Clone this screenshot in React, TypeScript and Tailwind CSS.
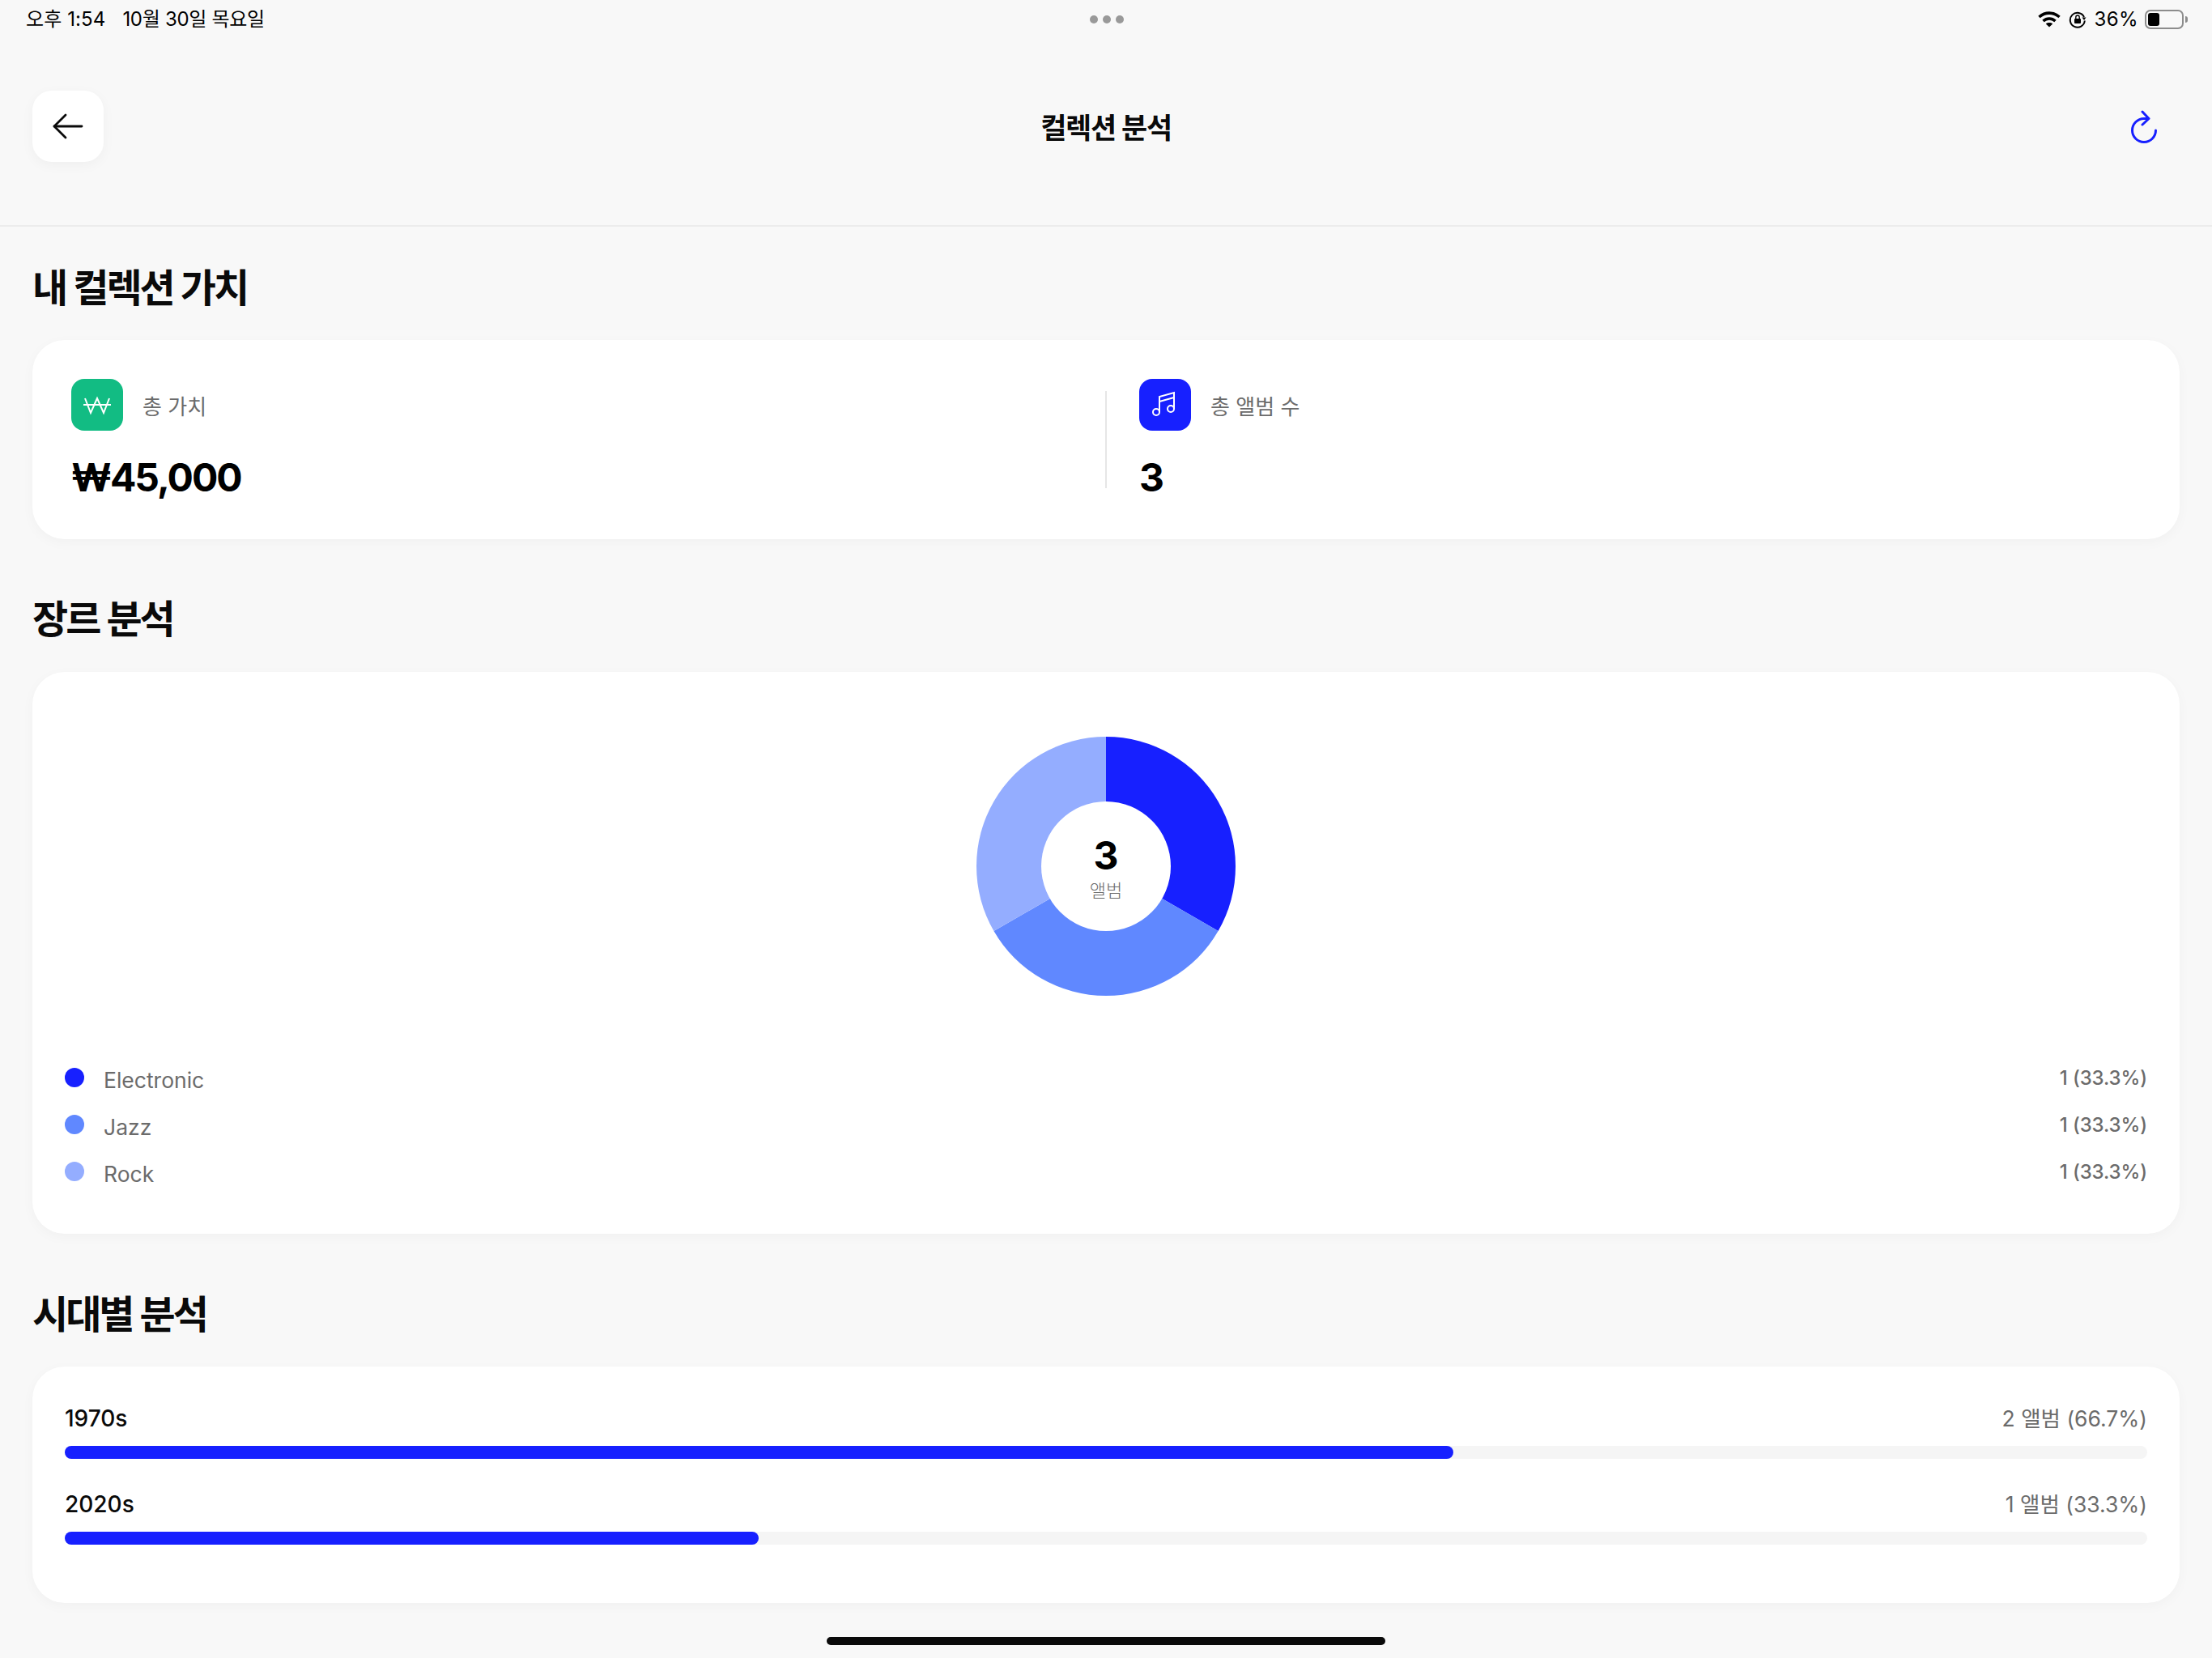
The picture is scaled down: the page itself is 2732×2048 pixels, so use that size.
import * as React from 'react';

const FONT = "font-['Inter','Noto_Sans_CJK_KR',sans-serif]";

function StatusBar() {
  return (
    <div className="flex h-[48px] items-center justify-between pl-[32px] pr-[30px] text-[24px] leading-[28px] text-black">
      <div className="flex w-[400px] gap-[21px]">
        <span className="tracking-[0.1px]">오후 1:54</span>
        <span className="tracking-[-0.3px]">10월 30일 목요일</span>
      </div>
      <div className="flex gap-[6px]">
        <span className="h-[10px] w-[10px] rounded-full bg-[#999999]" />
        <span className="h-[10px] w-[10px] rounded-full bg-[#999999]" />
        <span className="h-[10px] w-[10px] rounded-full bg-[#999999]" />
      </div>
      <div className="flex w-[400px] items-center justify-end">
        <svg width="28" height="20" viewBox="0 0 28 20" fill="none" stroke="black" strokeWidth="3.6">
          <path d="M1.5 7 C9 0.5 19 0.5 26.5 7" />
          <path d="M6.5 12 C11 8 17 8 21.5 12" />
          <path d="M14 19.5 L9.8 15.5 C12 13.6 16 13.6 18.2 15.5 Z" fill="black" stroke="none" />
        </svg>
        <svg className="ml-[10px]" width="22" height="22" viewBox="0 0 22 22" fill="none">
          <path d="M19 8 A9 9 0 1 0 19.8 12.5" stroke="black" strokeWidth="2" />
          <path d="M16.5 8.5 L21.5 8.5 L19 12 Z" fill="black" />
          <rect x="7" y="10" width="8" height="6" rx="1" fill="black" />
          <path d="M8.8 10 V8.2 A2.2 2.2 0 0 1 13.2 8.2 V10" stroke="black" strokeWidth="1.4" />
        </svg>
        <span className="ml-[10px] tracking-[0.4px]">36%</span>
        <div className="ml-[8px] flex h-[24px] w-[48px] items-center rounded-[7px] border-2 border-[#8c8c8c] pl-[2px]">
          <div className="h-[16px] w-[14px] rounded-[3px] bg-black" />
        </div>
        <div className="ml-[2px] h-[8px] w-[3px] rounded-r-full bg-[#8c8c8c]" />
      </div>
    </div>
  );
}

function Header() {
  return (
    <div className="flex h-[232px] items-start justify-between border-b-2 border-[#ececec] px-[40px] pt-[64px]">
      <button className="flex h-[88px] w-[88px] items-center justify-center rounded-[24px] bg-white shadow-[0_4px_16px_rgba(0,0,0,0.04)]">
        <svg width="40" height="34" viewBox="0 0 40 34" fill="none" stroke="#0a0a0a" strokeWidth="2.8" strokeLinecap="round" strokeLinejoin="round">
          <path d="M3 17 H37" />
          <path d="M17 3 L3 17 L17 31" />
        </svg>
      </button>
      <h1 className="mt-[24px] text-[35px] leading-[44px] font-semibold tracking-[-1.4px] text-[#0a0a0a]">컬렉션 분석</h1>
      <div className="flex h-[88px] w-[88px] items-center justify-end pr-[26px]">
        <svg className="mt-[2px]" width="36" height="42" viewBox="0 0 36 42" fill="none" stroke="#1720ff" strokeWidth="3" strokeLinecap="round" strokeLinejoin="round">
          <path d="M32.5 25 A14.5 14.5 0 1 1 18 10.5 H22" />
          <path d="M16 2 L24 10.5 L16 18" />
        </svg>
      </div>
    </div>
  );
}

function SectionTitle({ children }: { children: React.ReactNode }) {
  return <h2 className="text-[48px] leading-[56px] font-semibold tracking-[-3px] text-[#0a0a0a]">{children}</h2>;
}

function Card({ className, children }: { className: string; children: React.ReactNode }) {
  return (
    <div className={`rounded-[40px] bg-white shadow-[0_4px_16px_rgba(0,0,0,0.03)] ${className}`}>{children}</div>
  );
}

function Stat({ icon, color, label, value }: { icon: React.ReactNode; color: string; label: string; value: string }) {
  return (
    <div>
      <div className="flex items-center gap-[24px]">
        <div className={`flex h-[64px] w-[64px] items-center justify-center rounded-[16px] ${color}`}>{icon}</div>
        <span className="mt-[6px] text-[26px] leading-[36px] font-normal text-[#6b6b6b]">{label}</span>
      </div>
      <div className="mt-[28px] text-[48px] leading-[60px] font-bold tracking-[-2px] text-black">{value}</div>
    </div>
  );
}

const genres = [
  { name: 'Electronic', dot: 'bg-[#1720ff]' },
  { name: 'Jazz', dot: 'bg-[#6088ff]' },
  { name: 'Rock', dot: 'bg-[#94adff]' },
];

const eras = [
  { name: '1970s', label: '2 앨범 (66.7%)', width: 'w-[66.67%]' },
  { name: '2020s', label: '1 앨범 (33.3%)', width: 'w-[33.33%]' },
];

function Donut() {
  // 120도씩 세 조각
  const sx = 160 + 160 * Math.sin((2 * Math.PI) / 3);
  const sy = 160 - 160 * Math.cos((2 * Math.PI) / 3);
  const lx = 160 - 160 * Math.sin((2 * Math.PI) / 3);
  return (
    <div className="relative h-[320px] w-[320px]">
      <svg width="320" height="320" viewBox="0 0 320 320">
        <path d={`M160 160 L160 0 A160 160 0 0 1 ${sx} ${sy} Z`} fill="#1720ff" />
        <path d={`M160 160 L${sx} ${sy} A160 160 0 0 1 ${lx} ${sy} Z`} fill="#6088ff" />
        <path d={`M160 160 L${lx} ${sy} A160 160 0 0 1 160 0 Z`} fill="#94adff" />
      </svg>
      <div className="absolute top-[80px] left-[80px] flex h-[160px] w-[160px] flex-col items-center rounded-full bg-white pt-[39px]">
        <span className="text-[48px] leading-[56px] font-bold text-black">3</span>
        <span className="mt-[1px] text-[22px] leading-[28px] font-light text-[#6b6b6b]">앨범</span>
      </div>
    </div>
  );
}

export default function App() {
  return (
    <div className={`h-[2048px] w-full overflow-hidden bg-[#f8f8f8] ${FONT}`}>
      <StatusBar />
      <Header />
      <div className="px-[40px]">
        <div className="mt-[48px]">
          <SectionTitle>내 컬렉션 가치</SectionTitle>
        </div>
        <Card className="mt-[36px] flex h-[246px] items-start pt-[48px]">
          <div className="w-[1325px] pl-[48px]">
            <Stat
              color="bg-[#12bc83]"
              label="총 가치"
              value="₩45,000"
              icon={
                <svg width="64" height="64" viewBox="0 0 64 64" fill="none" stroke="white" strokeWidth="2">
                  <path d="M17 24 L24 42 L32 24 L40 42 L47 24" />
                  <path d="M15 32 H49" />
                </svg>
              }
            />
          </div>
          <div className="mt-[15px] h-[120px] w-[2px] bg-[#e6e6e6]" />
          <div className="pl-[40px]">
            <Stat
              color="bg-[#1720ff]"
              label="총 앨범 수"
              value="3"
              icon={
                <svg width="64" height="64" viewBox="0 0 64 64" fill="none" stroke="white" strokeWidth="2">
                  <circle cx="21" cy="41" r="4" />
                  <circle cx="39" cy="37" r="4" />
                  <path d="M25 41 V22 L43 17 V37" />
                  <path d="M25 28 L43 23" />
                </svg>
              }
            />
          </div>
        </Card>

        <div className="mt-[71px]">
          <SectionTitle>장르 분석</SectionTitle>
        </div>
        <Card className="mt-[37px] h-[694px] px-[40px] pt-[80px]">
          <div className="flex justify-center">
            <Donut />
          </div>
          <div className="mt-[84px] flex flex-col gap-[22px]">
            {genres.map((g) => (
              <div key={g.name} className="flex h-[36px] items-center justify-between">
                <div className="flex items-center gap-[24px]">
                  <span className={`mb-[2px] h-[24px] w-[24px] rounded-full ${g.dot}`} />
                  <span className="mt-[4px] text-[26.5px] leading-[36px] text-[#6b6b6b]">{g.name}</span>
                </div>
                <span className="text-[24px] leading-[32px] font-medium tracking-[-0.1px] text-[#6b6b6b]">1 (33.3%)</span>
              </div>
            ))}
          </div>
        </Card>

        <div className="mt-[72px]">
          <SectionTitle>시대별 분석</SectionTitle>
        </div>
        <Card className="mt-[36px] flex h-[292px] flex-col gap-[38px] px-[40px] pt-[46px]">
          {eras.map((e) => (
            <div key={e.name}>
              <div className="flex items-center justify-between">
                <span className="text-[28px] leading-[36px] font-medium text-[#0a0a0a]">{e.name}</span>
                <span className="text-[26.5px] leading-[36px] text-[#6b6b6b]">{e.label}</span>
              </div>
              <div className="mt-[16px] h-[16px] rounded-full bg-[#f5f5f5]">
                <div className={`h-full rounded-full bg-[#1720ff] ${e.width}`} />
              </div>
            </div>
          ))}
        </Card>
      </div>
      <div className="mx-auto mt-[42px] h-[10px] w-[690px] rounded-full bg-[#0a0a0a]" />
    </div>
  );
}
